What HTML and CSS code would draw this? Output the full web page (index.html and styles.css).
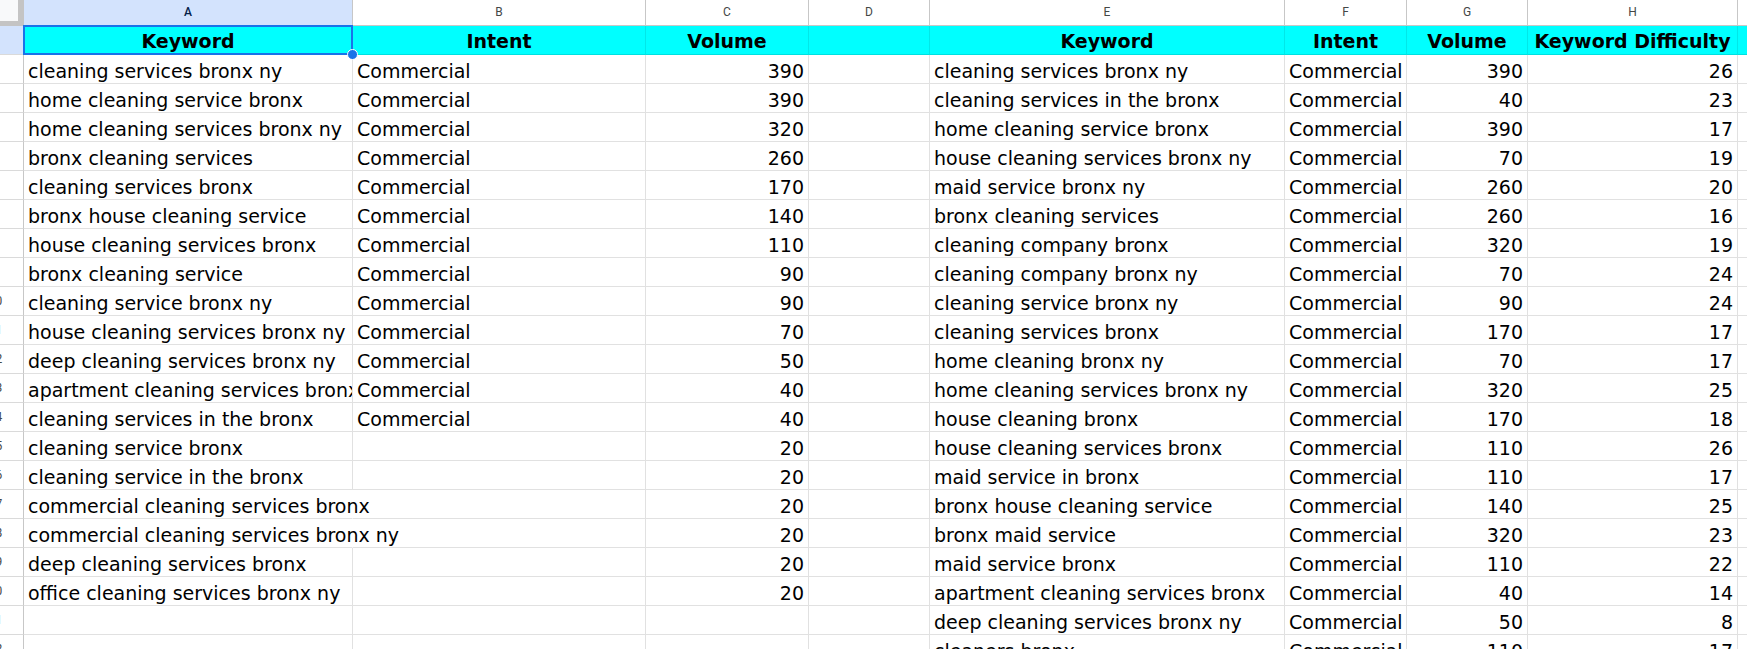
FILE: index.html
```html
<!DOCTYPE html>
<html lang="en">
<head>
<meta charset="utf-8">
<title>Bronx cleaning keywords</title>
<link rel="stylesheet" href="styles.css">
</head>
<body>
<div class="sheet">
  <div class="row colhead">
    <div class="corner"><div class="corner-box"></div></div>
    <div class="ch sel">A</div><div class="ch">B</div><div class="ch">C</div><div class="ch">D</div><div class="ch">E</div><div class="ch">F</div><div class="ch">G</div><div class="ch">H</div><div class="ch"></div>
  </div>
  <div class="row head">
    <div class="rh sel"><span>1</span></div>
    <div class="c hd a1">Keyword<div class="selection"></div><div class="handle"></div></div>
    <div class="c hd">Intent</div><div class="c hd">Volume</div><div class="c hd"></div>
    <div class="c hd">Keyword</div><div class="c hd">Intent</div><div class="c hd">Volume</div><div class="c hd">Keyword Difficulty</div><div class="c hd"></div>
  </div>
  <div class="row"><div class="rh"><span>2</span></div><div class="c">cleaning services bronx ny</div><div class="c">Commercial</div><div class="c num">390</div><div class="c"></div><div class="c">cleaning services bronx ny</div><div class="c">Commercial</div><div class="c num">390</div><div class="c num">26</div><div class="c"></div></div>
  <div class="row"><div class="rh"><span>3</span></div><div class="c">home cleaning service bronx</div><div class="c">Commercial</div><div class="c num">390</div><div class="c"></div><div class="c">cleaning services in the bronx</div><div class="c">Commercial</div><div class="c num">40</div><div class="c num">23</div><div class="c"></div></div>
  <div class="row"><div class="rh"><span>4</span></div><div class="c">home cleaning services bronx ny</div><div class="c">Commercial</div><div class="c num">320</div><div class="c"></div><div class="c">home cleaning service bronx</div><div class="c">Commercial</div><div class="c num">390</div><div class="c num">17</div><div class="c"></div></div>
  <div class="row"><div class="rh"><span>5</span></div><div class="c">bronx cleaning services</div><div class="c">Commercial</div><div class="c num">260</div><div class="c"></div><div class="c">house cleaning services bronx ny</div><div class="c">Commercial</div><div class="c num">70</div><div class="c num">19</div><div class="c"></div></div>
  <div class="row"><div class="rh"><span>6</span></div><div class="c">cleaning services bronx</div><div class="c">Commercial</div><div class="c num">170</div><div class="c"></div><div class="c">maid service bronx ny</div><div class="c">Commercial</div><div class="c num">260</div><div class="c num">20</div><div class="c"></div></div>
  <div class="row"><div class="rh"><span>7</span></div><div class="c">bronx house cleaning service</div><div class="c">Commercial</div><div class="c num">140</div><div class="c"></div><div class="c">bronx cleaning services</div><div class="c">Commercial</div><div class="c num">260</div><div class="c num">16</div><div class="c"></div></div>
  <div class="row"><div class="rh"><span>8</span></div><div class="c">house cleaning services bronx</div><div class="c">Commercial</div><div class="c num">110</div><div class="c"></div><div class="c">cleaning company bronx</div><div class="c">Commercial</div><div class="c num">320</div><div class="c num">19</div><div class="c"></div></div>
  <div class="row"><div class="rh"><span>9</span></div><div class="c">bronx cleaning service</div><div class="c">Commercial</div><div class="c num">90</div><div class="c"></div><div class="c">cleaning company bronx ny</div><div class="c">Commercial</div><div class="c num">70</div><div class="c num">24</div><div class="c"></div></div>
  <div class="row"><div class="rh"><span>10</span></div><div class="c">cleaning service bronx ny</div><div class="c">Commercial</div><div class="c num">90</div><div class="c"></div><div class="c">cleaning service bronx ny</div><div class="c">Commercial</div><div class="c num">90</div><div class="c num">24</div><div class="c"></div></div>
  <div class="row"><div class="rh"><span>11</span></div><div class="c">house cleaning services bronx ny</div><div class="c">Commercial</div><div class="c num">70</div><div class="c"></div><div class="c">cleaning services bronx</div><div class="c">Commercial</div><div class="c num">170</div><div class="c num">17</div><div class="c"></div></div>
  <div class="row"><div class="rh"><span>12</span></div><div class="c">deep cleaning services bronx ny</div><div class="c">Commercial</div><div class="c num">50</div><div class="c"></div><div class="c">home cleaning bronx ny</div><div class="c">Commercial</div><div class="c num">70</div><div class="c num">17</div><div class="c"></div></div>
  <div class="row"><div class="rh"><span>13</span></div><div class="c">apartment cleaning services bronx</div><div class="c">Commercial</div><div class="c num">40</div><div class="c"></div><div class="c">home cleaning services bronx ny</div><div class="c">Commercial</div><div class="c num">320</div><div class="c num">25</div><div class="c"></div></div>
  <div class="row"><div class="rh"><span>14</span></div><div class="c">cleaning services in the bronx</div><div class="c">Commercial</div><div class="c num">40</div><div class="c"></div><div class="c">house cleaning bronx</div><div class="c">Commercial</div><div class="c num">170</div><div class="c num">18</div><div class="c"></div></div>
  <div class="row"><div class="rh"><span>15</span></div><div class="c">cleaning service bronx</div><div class="c"></div><div class="c num">20</div><div class="c"></div><div class="c">house cleaning services bronx</div><div class="c">Commercial</div><div class="c num">110</div><div class="c num">26</div><div class="c"></div></div>
  <div class="row"><div class="rh"><span>16</span></div><div class="c">cleaning service in the bronx</div><div class="c"></div><div class="c num">20</div><div class="c"></div><div class="c">maid service in bronx</div><div class="c">Commercial</div><div class="c num">110</div><div class="c num">17</div><div class="c"></div></div>
  <div class="row"><div class="rh"><span>17</span></div><div class="c ov">commercial cleaning services bronx</div><div class="c"></div><div class="c num">20</div><div class="c"></div><div class="c">bronx house cleaning service</div><div class="c">Commercial</div><div class="c num">140</div><div class="c num">25</div><div class="c"></div></div>
  <div class="row"><div class="rh"><span>18</span></div><div class="c ov">commercial cleaning services bronx ny</div><div class="c"></div><div class="c num">20</div><div class="c"></div><div class="c">bronx maid service</div><div class="c">Commercial</div><div class="c num">320</div><div class="c num">23</div><div class="c"></div></div>
  <div class="row"><div class="rh"><span>19</span></div><div class="c">deep cleaning services bronx</div><div class="c"></div><div class="c num">20</div><div class="c"></div><div class="c">maid service bronx</div><div class="c">Commercial</div><div class="c num">110</div><div class="c num">22</div><div class="c"></div></div>
  <div class="row"><div class="rh"><span>20</span></div><div class="c">office cleaning services bronx ny</div><div class="c"></div><div class="c num">20</div><div class="c"></div><div class="c">apartment cleaning services bronx</div><div class="c">Commercial</div><div class="c num">40</div><div class="c num">14</div><div class="c"></div></div>
  <div class="row"><div class="rh"><span>21</span></div><div class="c"></div><div class="c"></div><div class="c num"></div><div class="c"></div><div class="c">deep cleaning services bronx ny</div><div class="c">Commercial</div><div class="c num">50</div><div class="c num">8</div><div class="c"></div></div>
  <div class="row"><div class="rh"><span>22</span></div><div class="c"></div><div class="c"></div><div class="c num"></div><div class="c"></div><div class="c">cleaners bronx</div><div class="c">Commercial</div><div class="c num">110</div><div class="c num">17</div><div class="c"></div></div>
</div>
</body>
</html>
```

FILE: styles.css
```css
html, body {
  margin: 0;
  padding: 0;
  background: #ffffff;
}

.sheet {
  width: 1747px;
  height: 649px;
  overflow: hidden;
  background: #ffffff;
}

.row {
  display: grid;
  grid-template-columns: 24px 329px 293px 163px 121px 355px 122px 121px 210px 20px;
  height: 29px;
}

.colhead {
  height: 26px;
}

/* top-left corner */
.corner {
  background: #c4c4c4;
  box-sizing: border-box;
}
.corner-box {
  width: 18px;
  height: 21px;
  background: #f8f9fa;
}

/* column letters */
.ch {
  box-sizing: border-box;
  border-right: 1px solid #c7c7c7;
  border-bottom: 1px solid #c7c7c7;
  font-family: Roboto, "Liberation Sans", sans-serif;
  font-size: 12px;
  color: #444746;
  display: flex;
  align-items: center;
  justify-content: center;
  padding-bottom: 2px;
}
.ch.sel {
  background: #d3e3fd;
  color: #041e49;
  font-weight: 500;
}

/* row numbers (header column scrolled, only partly visible) */
.rh {
  box-sizing: border-box;
  border-right: 1px solid #c7c7c7;
  border-bottom: 1px solid #dadada;
  overflow: hidden;
  display: flex;
  align-items: center;
  font-family: Roboto, "Liberation Sans", sans-serif;
  font-size: 12px;
  color: #444746;
}
.rh span {
  flex: none;
  width: 40px;
  margin-left: -24.5px;
  text-align: center;
}
.rh.sel {
  background: #d3e3fd;
}

/* data cells */
.c {
  box-sizing: border-box;
  border-right: 1px solid #e1e1e1;
  border-bottom: 1px solid #e1e1e1;
  padding: 0 4px 1px 4px;
  font-family: "DejaVu Sans", Verdana, sans-serif;
  font-size: 19px;
  line-height: 22px;
  color: #000000;
  white-space: nowrap;
  overflow: hidden;
  display: flex;
  align-items: flex-end;
}
.c.num {
  justify-content: flex-end;
}
.c.ov {
  overflow: visible;
  border-right-color: transparent;
}

/* header row */
.c.hd {
  background: #00ffff;
  font-weight: bold;
  justify-content: center;
  padding-bottom: 2px;
  border-right-color: #00e8e8;
  border-bottom-color: #00e0e0;
}

.a1 {
  position: relative;
  overflow: visible;
}
.selection {
  position: absolute;
  left: -1px;
  top: -1px;
  right: -1px;
  bottom: -1px;
  border: 2px solid #1a73e8;
  pointer-events: none;
}
.handle {
  position: absolute;
  right: -6px;
  bottom: -6px;
  width: 11px;
  height: 11px;
  box-sizing: border-box;
  border-radius: 50%;
  background: #1a73e8;
  border: 1px solid #ffffff;
  z-index: 2;
}
```
